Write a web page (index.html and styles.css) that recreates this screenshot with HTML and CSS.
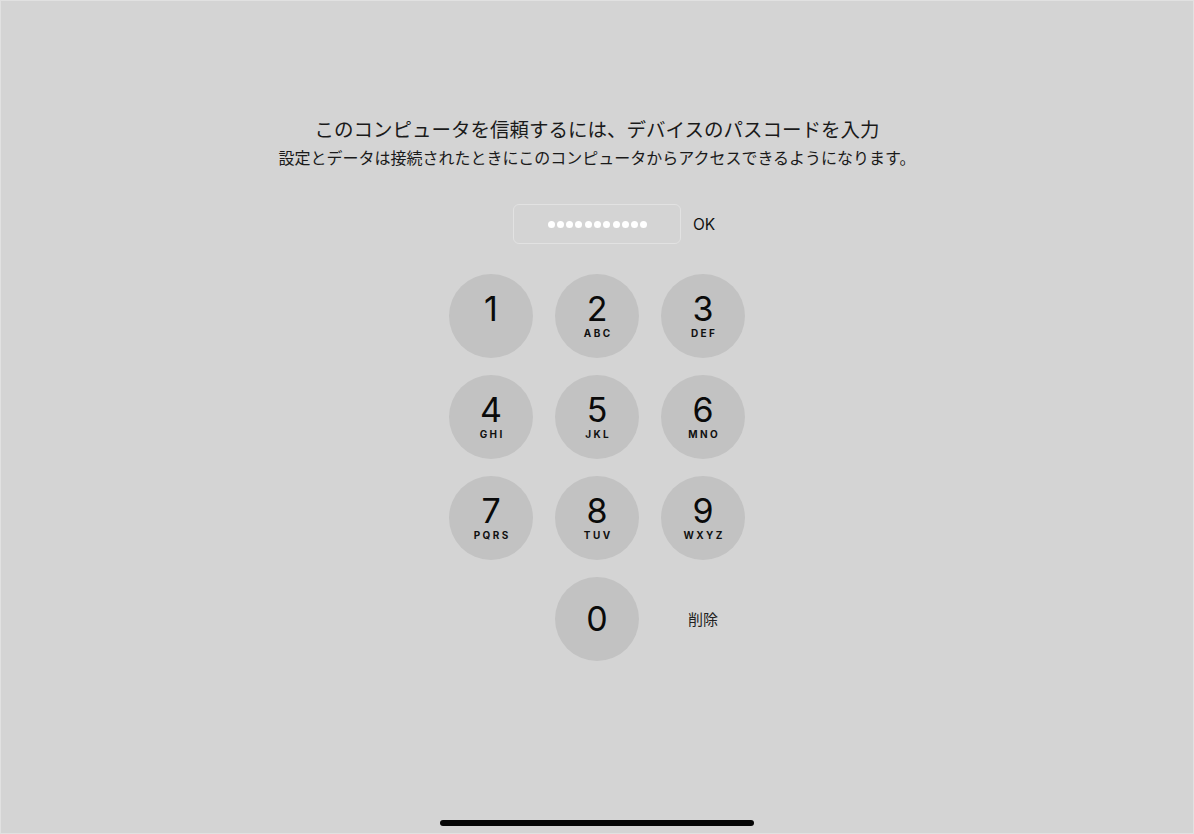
FILE: index.html
```html
<!DOCTYPE html>
<html lang="ja">
<head>
<meta charset="utf-8">
<title>パスコード</title>
<link rel="stylesheet" href="styles.css">
</head>
<body>
<div class="screen">
  <h1 class="title">このコンピュータを信頼するには、デバイスのパスコードを入力</h1>
  <p class="subtitle">設定とデータは接続されたときにこのコンピュータからアクセスできるようになります。</p>
  <div class="entry">
    <div class="spacer"></div>
    <div class="field">
      <span class="dot"></span><span class="dot"></span><span class="dot"></span><span class="dot"></span><span class="dot"></span><span class="dot"></span><span class="dot"></span><span class="dot"></span><span class="dot"></span><span class="dot"></span><span class="dot"></span>
    </div>
    <div class="ok">OK</div>
  </div>
  <div class="keypad">
    <div class="key"><span class="digit">1</span></div>
    <div class="key"><span class="digit">2</span><span class="letters">ABC</span></div>
    <div class="key"><span class="digit">3</span><span class="letters">DEF</span></div>
    <div class="key"><span class="digit">4</span><span class="letters">GHI</span></div>
    <div class="key"><span class="digit">5</span><span class="letters">JKL</span></div>
    <div class="key"><span class="digit">6</span><span class="letters">MNO</span></div>
    <div class="key"><span class="digit">7</span><span class="letters">PQRS</span></div>
    <div class="key"><span class="digit">8</span><span class="letters">TUV</span></div>
    <div class="key"><span class="digit">9</span><span class="letters">WXYZ</span></div>
    <div class="blank"></div>
    <div class="key key-zero"><span class="digit">0</span></div>
    <div class="delete">削除</div>
  </div>
  <div class="home-bar"></div>
</div>
</body>
</html>
```
FILE: styles.css
```css
* { box-sizing: border-box; }
html, body { margin: 0; padding: 0; }
body {
  background: #d4d4d4;
  font-family: "Noto Sans CJK JP", "Noto Sans", sans-serif;
  color: #111;
}
.screen {
  width: 1194px;
  height: 834px;
  border: 1px solid #e1e1e1;
  display: flex;
  flex-direction: column;
  align-items: center;
  padding-top: 115px;
  background: #d4d4d4;
}
.title {
  margin: 0;
  font-size: 19.5px;
  font-weight: 400;
  line-height: 26px;
  color: #1a1a1a;
}
.subtitle {
  margin: 4px 0 0;
  font-size: 16px;
  line-height: 22px;
  color: #1a1a1a;
}
.entry {
  margin-top: 36px;
  display: grid;
  grid-template-columns: 1fr 168px 1fr;
  width: 100%;
  align-items: center;
}
.field {
  height: 40px;
  border: 1px solid #e2e2e2;
  border-radius: 6px;
  display: flex;
  align-items: center;
  justify-content: center;
  gap: 2.3px;
  padding-left: 1px;
}
.dot {
  width: 7px;
  height: 7px;
  border-radius: 50%;
  background: #fff;
}
.ok {
  margin-left: 12px;
  font-family: "Inter", "Liberation Sans", sans-serif;
  font-size: 15.5px;
  color: #111;
}
.keypad {
  margin-top: 30px;
  display: grid;
  grid-template-columns: repeat(3, 84px);
  grid-auto-rows: 84px;
  column-gap: 22px;
  row-gap: 17px;
}
.key {
  width: 84px;
  height: 84px;
  border-radius: 50%;
  background: #c2c2c2;
  display: flex;
  flex-direction: column;
  align-items: center;
  padding-top: 18px;
}
.digit {
  font-family: "Inter", "Liberation Sans", sans-serif;
  font-size: 34px;
  line-height: 34px;
  font-weight: 400;
  color: #0a0a0a;
}
.letters {
  margin-top: 1.5px;
  font-family: "Inter", "Liberation Sans", sans-serif;
  font-size: 10px;
  line-height: 10px;
  font-weight: 700;
  letter-spacing: 2.4px;
  padding-left: 2.4px;
  color: #111;
}
.key-zero {
  justify-content: center;
  padding-top: 0;
}
.delete {
  display: flex;
  align-items: center;
  justify-content: center;
  font-size: 15px;
  padding-bottom: 2px;
  color: #222;
}
.home-bar {
  margin-top: auto;
  margin-bottom: 7px;
  width: 314px;
  height: 6px;
  border-radius: 3px;
  background: #050505;
}
```
